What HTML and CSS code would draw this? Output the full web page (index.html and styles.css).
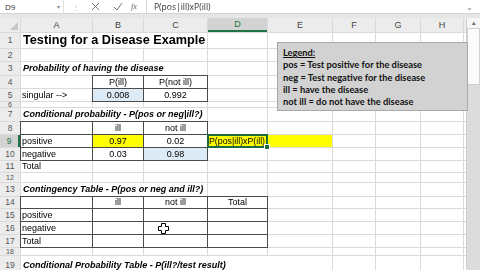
FILE: index.html
```html
<!DOCTYPE html>
<html lang="en">
<head>
  <meta charset="UTF-8" />
  <title>Testing for a Disease Example</title>
  <link rel="stylesheet" href="styles.css">
</head>
<body>
  <div class="formula-bar">
    <div class="name-box">D9<span class="caret">&#9662;</span></div>
    <div class="fx-tools">
      <span class="dots">&#8942;</span>
      <svg width="9" height="9" viewBox="0 0 9 9"><path d="M1 1L8 8M8 1L1 8" stroke="#777" stroke-width="1" fill="none"/></svg>
      <svg width="10" height="9" viewBox="0 0 10 9"><path d="M1 5L4 8L9 1" stroke="#777" stroke-width="1" fill="none"/></svg>
      <span class="fx">fx</span>
    </div>
    <div class="formula-input"><span class="t">P(pos|ill)xP(ill)</span></div>
    <div class="expand">&#8964;</div>
  </div>

  <div class="workbook">
    <div class="sheet">
      <!-- column headers -->
      <div class="corner"><span class="tri"></span></div>
      <div class="ch">A</div><div class="ch">B</div><div class="ch">C</div>
      <div class="ch ch-sel">D</div><div class="ch">E</div><div class="ch">F</div>
      <div class="ch">G</div><div class="ch">H</div><div class="ch"></div>

      <!-- 1 -->
      <div class="rh">1</div>
      <div class="c title span3"><span class="t">Testing for a Disease Example</span></div>
      <div class="c"></div><div class="c"></div><div class="c"></div><div class="c"></div><div class="c"></div><div class="c"></div>

      <!-- 2 -->
      <div class="rh">2</div>
      <div class="c"></div><div class="c"></div><div class="c"></div><div class="c"></div><div class="c"></div><div class="c"></div><div class="c"></div><div class="c"></div><div class="c"></div>

      <!-- 3 -->
      <div class="rh">3</div>
      <div class="c heading span3"><span class="t">Probability of having the disease</span></div>
      <div class="c"></div><div class="c"></div><div class="c"></div><div class="c"></div><div class="c"></div><div class="c"></div>

      <!-- 4 -->
      <div class="rh">4</div>
      <div class="c"></div>
      <div class="c box ctr"><span class="t">P(ill)</span></div>
      <div class="c box ctr"><span class="t">P(not ill)</span></div>
      <div class="c"></div><div class="c"></div><div class="c"></div><div class="c"></div><div class="c"></div><div class="c"></div>

      <!-- 5 -->
      <div class="rh">5</div>
      <div class="c"><span class="t">singular --&gt;</span></div>
      <div class="c box ctr blue"><span class="t">0.008</span></div>
      <div class="c box ctr"><span class="t">0.992</span></div>
      <div class="c"></div><div class="c"></div><div class="c"></div><div class="c"></div><div class="c"></div><div class="c"></div>

      <!-- 6 -->
      <div class="rh rh-short">6</div>
      <div class="c"></div><div class="c"></div><div class="c"></div><div class="c"></div><div class="c"></div><div class="c"></div><div class="c"></div><div class="c"></div><div class="c"></div>

      <!-- 7 -->
      <div class="rh">7</div>
      <div class="c heading span3"><span class="t">Conditional probability - P(pos or neg|ill?)</span></div>
      <div class="c"></div><div class="c"></div><div class="c"></div><div class="c"></div><div class="c"></div><div class="c"></div>

      <!-- 8 -->
      <div class="rh">8</div>
      <div class="c box"></div>
      <div class="c box ctr"><span class="t">ill</span></div>
      <div class="c box ctr"><span class="t">not ill</span></div>
      <div class="c"></div><div class="c"></div><div class="c"></div><div class="c"></div><div class="c"></div><div class="c"></div>

      <!-- 9 -->
      <div class="rh rh-sel">9</div>
      <div class="c box"><span class="t">positive</span></div>
      <div class="c box ctr yellow"><span class="t">0.97</span></div>
      <div class="c box ctr"><span class="t">0.02</span></div>
      <div class="c yellow selected"><span class="t">P(pos|ill)xP(ill)</span></div>
      <div class="c yellow"></div>
      <div class="c"></div><div class="c"></div><div class="c"></div><div class="c"></div>

      <!-- 10 -->
      <div class="rh">10</div>
      <div class="c box"><span class="t">negative</span></div>
      <div class="c box ctr"><span class="t">0.03</span></div>
      <div class="c box ctr blue"><span class="t">0.98</span></div>
      <div class="c"></div><div class="c"></div><div class="c"></div><div class="c"></div><div class="c"></div><div class="c"></div>

      <!-- 11 -->
      <div class="rh">11</div>
      <div class="c"><span class="t">Total</span></div>
      <div class="c"></div><div class="c"></div><div class="c"></div><div class="c"></div><div class="c"></div><div class="c"></div><div class="c"></div><div class="c"></div>

      <!-- 12 -->
      <div class="rh rh-short">12</div>
      <div class="c"></div><div class="c"></div><div class="c"></div><div class="c"></div><div class="c"></div><div class="c"></div><div class="c"></div><div class="c"></div><div class="c"></div>

      <!-- 13 -->
      <div class="rh">13</div>
      <div class="c heading span3"><span class="t">Contingency Table - P(pos or neg and ill?)</span></div>
      <div class="c"></div><div class="c"></div><div class="c"></div><div class="c"></div><div class="c"></div><div class="c"></div>

      <!-- 14 -->
      <div class="rh">14</div>
      <div class="c box"></div>
      <div class="c box ctr"><span class="t">ill</span></div>
      <div class="c box ctr"><span class="t">not ill</span></div>
      <div class="c box ctr"><span class="t">Total</span></div>
      <div class="c"></div><div class="c"></div><div class="c"></div><div class="c"></div><div class="c"></div>

      <!-- 15 -->
      <div class="rh">15</div>
      <div class="c box"><span class="t">positive</span></div>
      <div class="c box"></div><div class="c box"></div><div class="c box"></div>
      <div class="c"></div><div class="c"></div><div class="c"></div><div class="c"></div><div class="c"></div>

      <!-- 16 -->
      <div class="rh">16</div>
      <div class="c box"><span class="t">negative</span></div>
      <div class="c box"></div><div class="c box"></div><div class="c box"></div>
      <div class="c"></div><div class="c"></div><div class="c"></div><div class="c"></div><div class="c"></div>

      <!-- 17 -->
      <div class="rh">17</div>
      <div class="c box"><span class="t">Total</span></div>
      <div class="c box"></div><div class="c box"></div><div class="c box"></div>
      <div class="c"></div><div class="c"></div><div class="c"></div><div class="c"></div><div class="c"></div>

      <!-- 18 -->
      <div class="rh rh-short">18</div>
      <div class="c"></div><div class="c"></div><div class="c"></div><div class="c"></div><div class="c"></div><div class="c"></div><div class="c"></div><div class="c"></div><div class="c"></div>

      <!-- 19 -->
      <div class="rh">19</div>
      <div class="c heading span5"><span class="t">Conditional Probability Table - P(ill?/test result)</span></div>
      <div class="c"></div><div class="c"></div><div class="c"></div><div class="c"></div>

      <!-- floating text box -->
      <div class="legend">
        <p class="legend-title">Legend:</p>
        <p>pos = Test positive for the disease</p>
        <p>neg = Test negative for the disease</p>
        <p>ill = have the disease</p>
        <p>not ill = do not have the disease</p>
      </div>

      <!-- mouse pointer -->
      <svg class="cursor" width="11" height="11" viewBox="0 0 11 11">
        <path d="M3.5 0.5H7.5V3.5H10.5V7.5H7.5V10.5H3.5V7.5H0.5V3.5H3.5Z" fill="#fff" stroke="#000" stroke-width="1"/>
      </svg>
    </div>

    <div class="scrollbar">
      <div class="arrow">&#9652;</div>
      <div class="thumb"></div>
    </div>
  </div>
</body>
</html>
```

FILE: styles.css
```css
* {
    margin: 0;
    padding: 0;
    box-sizing: border-box;
}

body {
    width: 480px;
    height: 270px;
    overflow: hidden;
    background: #e6e6e6;
    font-family: 'Liberation Sans', Arial, sans-serif;
    color: #000;
}

/* keeps thin glyph stems grey instead of colour-fringed */
.t {
    display: inline-block;
    filter: grayscale(1);
}

/* formula bar */
.formula-bar {
    height: 14px;
    display: flex;
    align-items: center;
    background: #ffffff;
    border-bottom: 1px solid #d4d4d4;
    font-family: 'Open Sans', sans-serif;
    font-size: 8px;
    color: #333;
}

.name-box {
    width: 64px;
    height: 100%;
    display: flex;
    align-items: center;
    justify-content: space-between;
    padding: 0 3px 0 5px;
    border-right: 1px solid #e0e0e0;
}

.caret {
    font-size: 6px;
    color: #888;
}

.fx-tools {
    width: 82px;
    height: 100%;
    display: flex;
    align-items: center;
    gap: 13px;
    padding-left: 8px;
    background: #ffffff;
}

.dots {
    color: #bbb;
    font-size: 8px;
    margin-right: -2px;
}

.fx {
    font-family: 'Liberation Serif', serif;
    font-style: italic;
    font-size: 8px;
    color: #666;
    margin-left: -5px;
}

.formula-input {
    flex: 1;
    height: 100%;
    display: flex;
    align-items: center;
    padding-left: 7px;
    border-left: 1px solid #d4d4d4;
    font-size: 8.5px;
}

.expand {
    width: 12px;
    font-size: 8px;
    color: #777;
    line-height: 8px;
    margin-right: 2px;
}

/* workbook */
.workbook {
    margin-top: 4px;
    display: flex;
}

.sheet {
    position: relative;
    width: 466px;
    display: grid;
    grid-template-columns: 20px 71px 50px 63px 59px 64px 42px 44px 42px 2px;
    grid-template-rows: 14px 15px 12px 13px 12px 12px 5px 13px 12px 12px 12px 11px 9px 13px 11px 12px 12px 12px 7px 19px;
    gap: 1px;
    background: #dadada;
    font-size: 9px;
    line-height: 1;
}

.corner {
    position: relative;
    background: #ececec;
}

.tri {
    position: absolute;
    right: 2px;
    bottom: 2px;
    border-left: 8px solid transparent;
    border-bottom: 8px solid #c6c6c6;
}

.ch {
    background: #ececec;
    color: #444;
    display: flex;
    align-items: center;
    justify-content: center;
    font-size: 9px;
}

.ch-sel {
    background: #d3d3d3;
    color: #217346;
    border-bottom: 2px solid #217346;
}

.rh {
    background: #ececec;
    color: #555;
    display: flex;
    align-items: center;
    justify-content: center;
    font-size: 8.5px;
}

.rh-short {
    font-size: 7px;
    line-height: 6px;
}

.rh-sel {
    background: #d3d3d3;
    color: #217346;
    border-right: 2px solid #217346;
}

.c {
    background: #ffffff;
    display: flex;
    align-items: center;
    padding-left: 1px;
    white-space: nowrap;
}

.span3 { grid-column: span 3; }
.span5 { grid-column: span 5; }

.title {
    font-size: 12.7px;
    font-weight: bold;
    padding-left: 2px;
}

.heading {
    font-weight: bold;
    font-style: italic;
    padding-left: 2px;
}

.ctr {
    justify-content: center;
    padding-left: 0;
}

.box {
    box-shadow: 0 0 0 1px #4a4a4a;
}

.yellow {
    background: #ffff00;
}

.blue {
    background: #ddebf7;
}

.selected {
    position: relative;
    z-index: 1;
    box-shadow: 0 0 0 1px #1e6b3e, inset 0 0 0 1px #1e6b3e;
    padding-left: 1px;
    font-size: 8.8px;
}

.selected::after {
    content: "";
    position: absolute;
    right: -3px;
    bottom: -3px;
    width: 4px;
    height: 4px;
    background: #1e6b3e;
    border: 1px solid #fff;
}

/* text box over the grid */
.legend {
    position: absolute;
    z-index: 2;
    left: 277px;
    top: 24px;
    width: 191px;
    height: 69px;
    background: #d2d2d2;
    border: 1px solid #a9a9a9;
    padding: 4px 0 0 5px;
    font-family: 'Lato', sans-serif;
    font-weight: bold;
    font-size: 9.3px;
    line-height: 12.3px;
    color: #111;
}

.legend-title {
    text-decoration: underline;
}

.cursor {
    position: absolute;
    z-index: 2;
    left: 158px;
    top: 205px;
}

/* scrollbar */
.scrollbar {
    width: 14px;
    height: 260px;
    background: #dcdcdc;
    border-left: 1px solid #cfcfcf;
    display: flex;
    flex-direction: column;
}

.arrow {
    height: 10px;
    background: #f7f7f7;
    color: #666;
    font-size: 7px;
    text-align: center;
    line-height: 10px;
}

.thumb {
    height: 57px;
    background: #fbfbfb;
    border: 1px solid #d0d0d0;
}
```
